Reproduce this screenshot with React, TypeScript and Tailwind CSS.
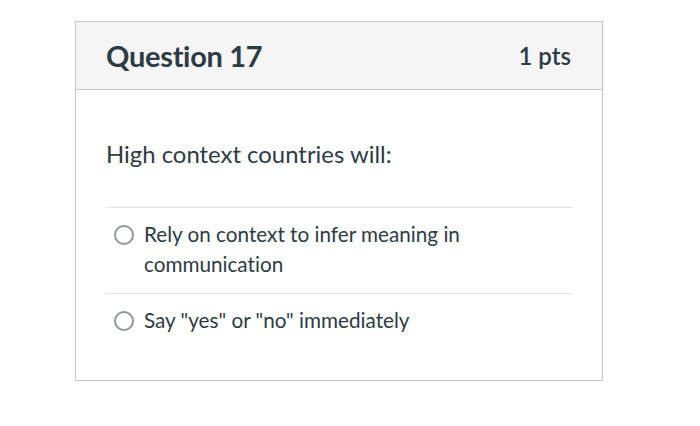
export default function App() {
  const options = [
    "Rely on context to infer meaning in communication",
    'Say "yes" or "no" immediately',
  ]

  return (
    <div
      className="w-[700px] h-[426px] bg-white pt-[21px] pl-[75px] [font-variant-ligatures:none]"
      style={{ fontFamily: "Lato, 'Open Sans', sans-serif" }}
    >
      <div className="w-[528px] h-[360px] border border-[#c4c8cc] flex flex-col">
        {/* header */}
        <div className="h-[68px] bg-[#f5f5f5] border-b border-[#c4c8cc] flex items-center justify-between pl-[30px] pr-[31px]">
          <span className="text-[29px] font-bold text-[#2d3b45] tracking-[-0.3px]">Question 17</span>
          <span className="text-[24px] font-semibold text-[#2d3b45]">1 pts</span>
        </div>

        {/* body */}
        <div className="px-[30px] pt-[49px]">
          <p className="text-[23.9px] text-[#2d3b45] leading-[30px]">High context countries will:</p>
          <div className="mt-[38px] border-t border-[#e2e4e6]">
            {options.map((opt, i) => (
              <div key={i} className={"flex items-start gap-[10px] pl-[8px] pt-[11px] pb-[14px] " + (i > 0 ? "border-t border-[#e2e4e6]" : "")}>
                <span className="mt-[6px] shrink-0 w-[20px] h-[20px] rounded-full border-2 border-[#8f979d] bg-white" />
                <span className="text-[20.7px] leading-[30px] text-[#2d3b45] w-[340px]">{opt}</span>
              </div>
            ))}
          </div>
        </div>
      </div>
    </div>
  )
}
